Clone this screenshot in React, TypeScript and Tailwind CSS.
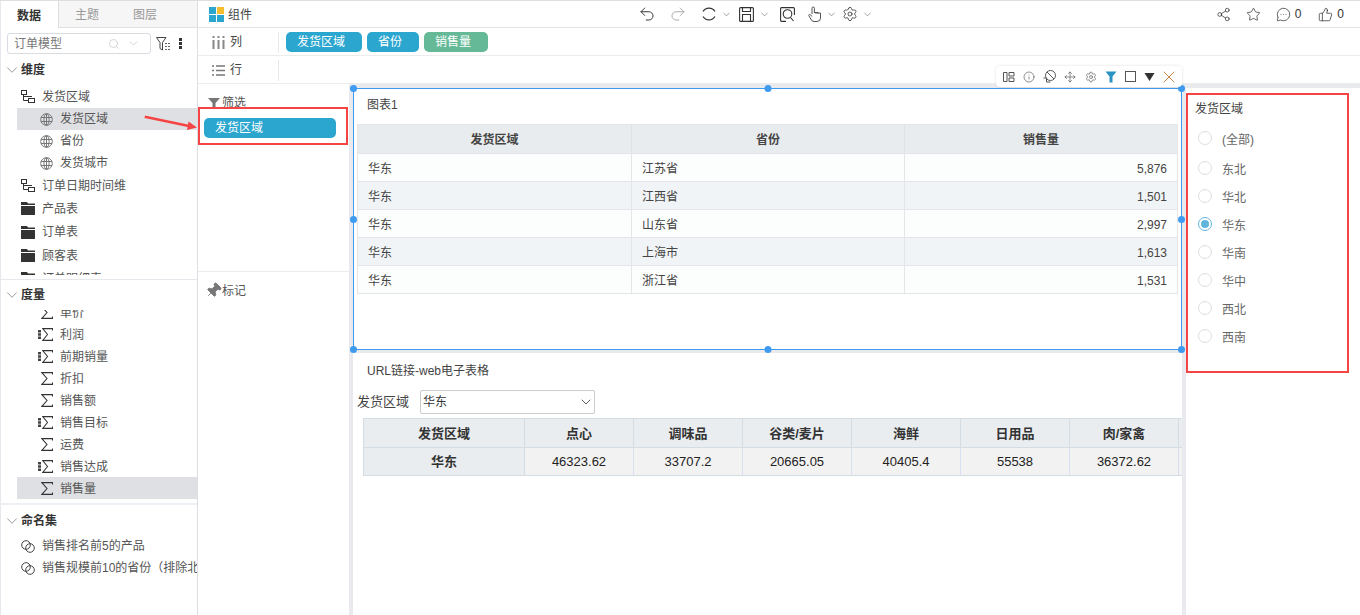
import { ChevronDown, Search, Undo2, Redo2, Settings, Share2, Star, MessageCircleMore, ThumbsUp, Info, Move, X, Pin } from "lucide-react";

const font = "font-['Liberation_Sans','Noto_Sans_CJK_SC',sans-serif]";

function Hier() {
  return (
    <svg width="14" height="14" viewBox="0 0 14 14" fill="none" stroke="#333" strokeWidth="1" className="shrink-0">
      <rect x="0.5" y="0.5" width="5" height="4" />
      <rect x="7.5" y="8.5" width="6" height="4" />
      <path d="M2.5 4.5V10.5H7.5M2.5 6.5H11" />
    </svg>
  );
}

function Globe() {
  return (
    <svg width="13" height="13" viewBox="0 0 13 13" fill="none" stroke="#777" strokeWidth="1" className="shrink-0">
      <circle cx="6.5" cy="6.5" r="5.8" />
      <ellipse cx="6.5" cy="6.5" rx="2.6" ry="5.8" />
      <path d="M1 4.5H12M1 8.5H12M6.5 1V12" />
    </svg>
  );
}

function Folder() {
  return (
    <svg width="14" height="13" viewBox="0 0 14 13" fill="#333" className="shrink-0">
      <path d="M0 0H6L7 1.5H14V3H0ZM0 4H14V13H0Z" />
    </svg>
  );
}

function Sigma({ w = 12 }: { w?: number }) {
  return (
    <svg width={w} height="13" viewBox="0 0 12 13" preserveAspectRatio="none" fill="none" stroke="#333" strokeWidth="1.1" className="shrink-0">
      <path d="M11.5 2.5V0.6H0.8L6 6.5L0.8 12.4H11.5V10.5" />
    </svg>
  );
}

function Rings() {
  return (
    <svg width="14" height="13" viewBox="0 0 14 13" fill="none" stroke="#444" strokeWidth="1" className="shrink-0">
      <circle cx="5" cy="5" r="4.3" />
      <circle cx="9" cy="8" r="4.3" />
    </svg>
  );
}

function BarSigma() {
  return (
    <span className="flex items-center gap-[1px]">
      <svg width="3" height="9" viewBox="0 0 3 9" fill="#444" className="shrink-0">
        <path d="M0 0H3V2.5H0ZM0 3.2H3V5.7H0ZM0 6.5H3V9H0Z" />
      </svg>
      <Sigma w={11} />
    </span>
  );
}

function TreeRow({ icon, label, sel, low, indent = 36 }: { icon: React.ReactNode; label: string; sel?: boolean; low?: boolean; indent?: number }) {
  return (
    <div className={`flex h-[22px] items-center ml-[17px] whitespace-nowrap overflow-hidden ${sel ? "bg-[#dfe0e3]" : ""}`}>
      <div className="flex shrink-0 justify-end" style={{ width: indent }}>{icon}</div>
      <span className={`ml-[7px] text-[12px] text-[#555] ${low ? "pt-[2px]" : ""}`}>{label}</span>
    </div>
  );
}

function TopRow({ icon, label, tall }: { icon: React.ReactNode; label: string; tall?: boolean }) {
  return (
    <div className={`flex items-center pl-[21px] whitespace-nowrap overflow-hidden ${tall ? "h-[24px]" : "h-[23px]"}`}>
      <div className="flex w-[14px] shrink-0 justify-center">{icon}</div>
      <span className="ml-[7px] text-[12px] text-[#555]">{label}</span>
    </div>
  );
}

function SectionHead({ label }: { label: string }) {
  return (
    <div className="flex h-[22px] items-center pl-[3px]">
      <ChevronDown size={18} strokeWidth={1} className="text-[#777]" />
      <span className="text-[12px] font-bold text-[#333]">{label}</span>
    </div>
  );
}

function Sidebar() {
  return (
    <div className="flex h-full w-[198px] shrink-0 flex-col border-r border-[#dcdee3] shadow-[inset_1px_0_0_#e6e8ee]">
      <div className="flex h-[27px] shrink-0 text-[12px]">
        <div className="flex w-[59px] items-center justify-center border-r border-[#ddd] pt-[2px] font-bold text-[#333]">数据</div>
        <div className="flex flex-1 items-center border-b border-[#e2e2e2] bg-[#f6f6f6] pt-[2px] text-[#999]">
          <span className="ml-[16px]">主题</span>
          <span className="ml-[34px]">图层</span>
        </div>
      </div>
      <div className="flex h-[31px] shrink-0 items-center pl-[7px]">
        <div className="flex h-[21px] w-[144px] items-center rounded-[3px] border border-[#d9dbe0] pl-[6px] pr-[10px] text-[12px] text-[#777]">
          <span className="flex-1 pt-[1px]">订单模型</span>
          <Search size={12} strokeWidth={1.2} className="text-[#bbb]" />
          <ChevronDown size={13} strokeWidth={1.2} className="ml-[7px] text-[#bbb]" />
        </div>
        <svg width="16" height="14" viewBox="0 0 16 14" fill="none" stroke="#444" className="ml-[5px]">
          <path d="M0.5 0.5H10L6.5 5.5V13L4 11.5V5.5Z" />
          <path d="M9 6.5H15M9 9.5H15M9 12.5H15" stroke="#666" strokeDasharray="2 1" />
        </svg>
        <div className="ml-[7px] flex flex-col gap-[1px]">
          <div className="h-[3px] w-[3px] bg-[#333]" />
          <div className="h-[3px] w-[3px] bg-[#333]" />
          <div className="h-[3px] w-[3px] bg-[#333]" />
        </div>
      </div>

      <div className="h-[221px] shrink-0 border-b border-[#e6e8ee]">
        <div className="h-[216px] overflow-hidden">
          <SectionHead label="维度" />
          <div className="h-[4px]" />
          <TopRow icon={<Hier />} label="发货区域" />
          <TreeRow icon={<Globe />} label="发货区域" sel />
          <TreeRow icon={<Globe />} label="省份" />
          <TreeRow icon={<Globe />} label="发货城市" />
          <TopRow icon={<Hier />} label="订单日期时间维" />
          <TopRow icon={<Folder />} label="产品表" />
          <TopRow icon={<Folder />} label="订单表" tall />
          <TopRow icon={<Folder />} label="顾客表" />
          <TopRow icon={<Folder />} label="订单明细表" />
        </div>
      </div>

      <div className="h-[225px] shrink-0 overflow-hidden border-b-2 border-[#edeff5]">
        <div className="pt-[4px]">
          <SectionHead label="度量" />
        </div>
        <div className="mt-[4px] h-[189px] overflow-hidden">
          <div className="-mt-[9px]">
            <TreeRow icon={<Sigma />} label="单价" low />
            <TreeRow icon={<BarSigma />} label="利润" low />
            <TreeRow icon={<BarSigma />} label="前期销量" low />
            <TreeRow icon={<Sigma />} label="折扣" low />
            <TreeRow icon={<Sigma />} label="销售额" low />
            <TreeRow icon={<BarSigma />} label="销售目标" low />
            <TreeRow icon={<Sigma />} label="运费" low />
            <TreeRow icon={<BarSigma />} label="销售达成" low />
            <TreeRow icon={<Sigma />} label="销售量" sel low />
          </div>
        </div>
      </div>

      <div className="flex-1 overflow-hidden pt-[5px]">
        <SectionHead label="命名集" />
        <div className="h-[3px]" />
        <TreeRow icon={<Rings />} label="销售排名前5的产品" indent={18} />
        <TreeRow icon={<Rings />} label="销售规模前10的省份（排除北京）" indent={18} />
      </div>
    </div>
  );
}

function Caret({ className = "ml-[5px]" }: { className?: string }) {
  return <ChevronDown size={11} strokeWidth={1.3} className={`${className} text-[#666]`} />;
}

function Toolbar() {
  return (
    <div className="flex h-[27px] shrink-0 items-center border-b border-[#e4e4e4] text-[#333]">
      <div className="flex w-[440px] items-center pl-[11px]">
        <div className="grid h-[15px] w-[15px] grid-cols-2 gap-[1px]">
          <div className="bg-[#2ba6cf]" />
          <div className="bg-[#f5bd2f]" />
          <div className="bg-[#2ba6cf]" />
          <div className="bg-[#2ba6cf]" />
        </div>
        <span className="ml-[4px] pt-[1px] text-[12px] text-[#444]">组件</span>
      </div>
      <div className="flex items-center">
        <Undo2 size={18} strokeWidth={1.3} />
        <Redo2 size={18} strokeWidth={1.3} className="ml-[13px] text-[#aaa]" />
        <svg width="16" height="16" viewBox="0 0 16 16" fill="none" stroke="#333" strokeWidth="1.2" className="ml-[14px]">
          <path d="M2 5.5A7 7 0 0 1 14 5.5M14 10.5A7 7 0 0 1 2 10.5" />
        </svg>
        <Caret className="ml-[4px]" />
        <svg width="15" height="15" viewBox="0 0 15 15" fill="none" stroke="#333" strokeWidth="1.1" className="ml-[7px]">
          <rect x="0.6" y="0.6" width="13.8" height="13.8" rx="1" />
          <path d="M3.5 0.6V4.5H11.5V0.6M3.5 14.4V7.5H11.5V14.4" />
        </svg>
        <Caret />
        <svg width="15" height="15" viewBox="0 0 15 15" fill="none" stroke="#333" strokeWidth="1.1" className="ml-[10px]">
          <path d="M6 14.4H1.5A1 1 0 0 1 0.6 13.4V1.6A1 1 0 0 1 1.5 0.6H13.4A1 1 0 0 1 14.4 1.6V8" />
          <circle cx="7.5" cy="7" r="4.3" />
          <path d="M10.5 10.5L13.5 14" />
        </svg>
        <svg width="14" height="16" viewBox="0 0 14 16" fill="none" stroke="#555" strokeWidth="1" className="ml-[13px]">
          <path d="M4 8V2.2A1.2 1.2 0 0 1 6.4 2.2V7M6.4 6.5H8V8M8 6.5H10V8M10 7H12.5V12A3.5 3.5 0 0 1 9 15.5H6A3.5 3.5 0 0 1 2.8 13L0.8 9.5C0.4 8.5 2 7.8 2.8 9L4 10.5" />
        </svg>
        <Caret className="ml-[4px]" />
        <Settings size={16} strokeWidth={1.2} className="ml-[5px]" />
        <Caret className="ml-[4px]" />
      </div>
      <div className="ml-auto flex items-center pr-[16px] text-[12px]">
        <Share2 size={15} strokeWidth={1.2} />
        <Star size={15} strokeWidth={1.2} className="ml-[15px]" />
        <MessageCircleMore size={15} strokeWidth={1.2} className="ml-[15px]" />
        <span className="ml-[4px]">0</span>
        <ThumbsUp size={15} strokeWidth={1.2} className="ml-[17px]" />
        <span className="ml-[4px]">0</span>
      </div>
    </div>
  );
}

function Pill({ label, color = "bg-[#2ba6cf]", w }: { label: string; color?: string; w: string }) {
  return (
    <div className={`flex h-[20px] items-center rounded-[5px] pl-[11px] text-[12px] text-white ${color} ${w}`}>{label}</div>
  );
}

function ShelfRow({ icon, label, children }: { icon: React.ReactNode; label: string; children?: React.ReactNode }) {
  return (
    <div className="flex h-[28px] shrink-0 items-center border-b border-[#ececec] pt-[1px]">
      <div className="flex h-[21px] w-[81px] items-center border-r border-[#e8e8e8] pl-[14px] text-[12px] text-[#444]">
        <span className="flex w-[13px] justify-center">{icon}</span>
        <span className="ml-[5px]">{label}</span>
      </div>
      <div className="ml-[7px] flex gap-[5px]">{children}</div>
    </div>
  );
}

function ChartCard() {
  const rows = [
    ["江苏省", "5,876"],
    ["江西省", "1,501"],
    ["山东省", "2,997"],
    ["上海市", "1,613"],
    ["浙江省", "1,531"],
  ];
  return (
    <div className="relative h-[262px] shrink-0 border border-[#3f9bf0] bg-white pl-[3px] pr-[3px]">
      <div className="flex h-[35px] items-center pb-[3px] pl-[10px] text-[12px] text-[#444]">图表1</div>
      <div className="border border-[#e3e5e8] text-[12px] text-[#444]">
        <div className="grid h-[28px] grid-cols-[274px_273px_1fr] items-stretch bg-[#e9ecef] font-bold">
          <div className="flex items-center justify-center border-r border-[#dfe2e6] pt-[1px]">发货区域</div>
          <div className="flex items-center justify-center border-r border-[#dfe2e6] pt-[1px]">省份</div>
          <div className="flex items-center justify-center pt-[1px]">销售量</div>
        </div>
        {rows.map((r, i) => (
          <div key={r[0]} className={`grid h-[28px] grid-cols-[274px_273px_1fr] border-t border-[#e3e5e8] ${i % 2 ? "bg-[#f1f4f6]" : "bg-[#fcfdfd]"}`}>
            <div className="flex items-center border-r border-[#e3e5e8] pl-[10px] pt-[3px]">华东</div>
            <div className="flex items-center border-r border-[#e3e5e8] pl-[10px] pt-[3px]">{r[0]}</div>
            <div className="flex items-center justify-end pr-[10px] pt-[3px]">{r[1]}</div>
          </div>
        ))}
      </div>
      <div className="absolute -left-[4px] -top-[4px] h-[7px] w-[7px] rounded-full bg-[#3f9bf0]" />
      <div className="absolute left-1/2 -top-[4px] h-[7px] w-[7px] -translate-x-1/2 rounded-full bg-[#3f9bf0]" />
      <div className="absolute -right-[4px] -top-[4px] h-[7px] w-[7px] rounded-full bg-[#3f9bf0]" />
      <div className="absolute -left-[4px] top-[127px] h-[7px] w-[7px] rounded-full bg-[#3f9bf0]" />
      <div className="absolute -right-[4px] top-[127px] h-[7px] w-[7px] rounded-full bg-[#3f9bf0]" />
      <div className="absolute -left-[4px] -bottom-[4px] h-[7px] w-[7px] rounded-full bg-[#3f9bf0]" />
      <div className="absolute left-1/2 -bottom-[4px] h-[7px] w-[7px] -translate-x-1/2 rounded-full bg-[#3f9bf0]" />
      <div className="absolute -right-[4px] -bottom-[4px] h-[7px] w-[7px] rounded-full bg-[#3f9bf0]" />
      <div className="absolute -right-[1px] -top-[23px] flex h-[21px] w-[186px] items-center justify-between rounded-[4px] bg-white px-[7px] text-[#555] shadow-[0_0_3px_rgba(0,0,0,0.12)]">
        <svg width="12" height="12" viewBox="0 0 12 12" fill="none" stroke="#555">
          <path d="M0.5 1.5H4V10.5H0.5ZM6 1.5H11V5H6ZM6 7H11V10.5H6Z" />
        </svg>
        <Info size={12} strokeWidth={1.3} />
        <svg width="13" height="13" viewBox="0 0 13 13" fill="none" stroke="#555">
          <circle cx="7.5" cy="5.5" r="5" />
          <path d="M4 2L11 9M0.5 8H3.5V12H7.5" />
        </svg>
        <Move size={12} strokeWidth={1.3} />
        <Settings size={12} strokeWidth={1.3} />
        <svg width="12" height="12" viewBox="0 0 12 12" fill="#2a93c2">
          <path d="M0.5 0.5H11.5L7.5 5.5V11.5H4.5V5.5Z" />
        </svg>
        <svg width="11" height="11" viewBox="0 0 11 11" fill="none" stroke="#555">
          <rect x="0.5" y="0.5" width="10" height="10" />
        </svg>
        <svg width="11" height="8" viewBox="0 0 11 8" fill="#333">
          <path d="M0.5 0H10.5L5.5 8Z" />
        </svg>
        <X size={20} strokeWidth={1.2} className="-mx-[4px] text-[#c9894d]" />
      </div>
    </div>
  );
}

function SheetCard() {
  const cols: [string, string][] = [
    ["点心", "46323.62"],
    ["调味品", "33707.2"],
    ["谷类/麦片", "20665.05"],
    ["海鲜", "40405.4"],
    ["日用品", "55538"],
    ["肉/家禽", "36372.62"],
  ];
  return (
    <div className="min-h-0 flex-1 overflow-hidden bg-white text-[12px]">
      <div className="flex h-[37px] items-center pl-[14px] pb-[1px] text-[#444]">URL链接-web电子表格</div>
      <div className="flex h-[24px] items-center pl-[4px]">
        <span className="text-[13px] text-[#444]">发货区域</span>
        <div className="ml-[11px] flex h-[24px] w-[175px] items-center justify-between rounded-[2px] border border-[#ccc] pl-[2px] text-[#333]">
          华东
          <ChevronDown size={16} strokeWidth={1.2} />
        </div>
      </div>
      <div className="ml-[10px] mt-[4px] flex h-[58px] w-[830px] border-b border-l border-t border-[#d5dde4] text-[13px]">
        <div className="w-[161px] shrink-0 border-r border-[#d5dde4] bg-[#e9edf0] font-bold text-[#333]">
          <div className="flex h-[29px] items-center justify-center border-b border-[#d5dde4] pt-[2px]">发货区域</div>
          <div className="flex h-[27px] items-center justify-center">华东</div>
        </div>
        {cols.map((c) => (
          <div key={c[0]} className="w-[109px] shrink-0">
            <div className="flex h-[29px] items-center justify-center border-b border-r border-[#d5dde4] bg-[#e9edf0] pt-[2px] font-bold text-[#333]">{c[0]}</div>
            <div className="flex h-[27px] items-center justify-center border-r border-[#d6e0f0] bg-[#f2f2f2] text-[#222]">{c[1]}</div>
          </div>
        ))}
        <div className="flex-1">
          <div className="h-[29px] border-b border-[#d5dde4] bg-[#e9edf0]" />
          <div className="h-[27px] bg-[#f2f2f2]" />
        </div>
      </div>
    </div>
  );
}

function RadioPanel() {
  const opts = ["东北", "华北", "华东", "华南", "华中", "西北", "西南"];
  return (
    <div className="w-[174px] shrink-0 self-stretch bg-white pl-[10px] text-[12px]">
      <div className="-ml-[1px] flex h-[38px] items-center pt-[4px] text-[#444]">发货区域</div>
      <div className="flex h-[28px] items-center text-[#666]">
        <span className="mb-[4px] ml-[2px] h-[14px] w-[14px] rounded-full border border-[#dcdee3]" />
        <span className="ml-[10px]">(全部)</span>
      </div>
      <div className="mt-[2px]">
        {opts.map((o) => (
          <div key={o} className="flex h-[28px] items-center text-[#666]">
            {o === "华东" ? (
              <span className="mb-[4px] ml-[2px] flex h-[14px] w-[14px] items-center justify-center rounded-full border border-[#5fb6dc]">
                <span className="h-[8px] w-[8px] rounded-full bg-[#5fb6dc]" />
              </span>
            ) : (
              <span className="mb-[4px] ml-[2px] h-[14px] w-[14px] rounded-full border border-[#dcdee3]" />
            )}
            <span className="ml-[10px]">{o}</span>
          </div>
        ))}
      </div>
    </div>
  );
}

export default function App() {
  return (
    <div className={`relative flex h-[615px] w-[1360px] flex-col overflow-hidden border-t border-[#dedede] bg-white ${font}`}>
      <div className="flex min-h-0 flex-1">
        <Sidebar />
        <div className="flex min-w-0 flex-1 flex-col">
          <Toolbar />
          <ShelfRow
            icon={
              <svg width="13" height="13" viewBox="0 0 13 13" fill="#888">
                <path d="M0.5 0H2.5V2H0.5ZM0.5 4H2.5V13H0.5ZM5.5 0H7.5V2H5.5ZM5.5 4H7.5V13H5.5ZM10.5 0H12.5V2H10.5ZM10.5 4H12.5V13H10.5Z" />
              </svg>
            }
            label="列"
          >
            <Pill label="发货区域" w="w-[76px]" />
            <Pill label="省份" w="w-[52px]" />
            <Pill label="销售量" color="bg-[#65b997]" w="w-[64px]" />
          </ShelfRow>
          <ShelfRow
            icon={
              <svg width="13" height="11" viewBox="0 0 13 11" fill="none" stroke="#777" strokeWidth="1.4">
                <path d="M0 1H2M4 1H13M0 5.5H2M4 5.5H13M0 10H2M4 10H13" />
              </svg>
            }
            label="行"
          />
          <div className="flex min-h-0 flex-1">
            <div className="flex w-[151px] shrink-0 flex-col bg-white text-[12px] text-[#555]">
              <div className="h-[187px] px-[6px] pt-[11px]">
                <div className="flex h-[16px] items-center gap-[2px] pl-[4px]">
                  <svg width="12" height="11" viewBox="0 0 12 11" fill="#777">
                    <path d="M0 0H12L7.5 5V11H4.5V5Z" />
                  </svg>
                  <span>筛选</span>
                </div>
                <div className="mt-[7px] flex h-[20px] w-[132px] items-center rounded-[5px] bg-[#2ba6cf] pl-[11px] text-white">发货区域</div>
              </div>
              <div className="flex h-[38px] items-center border-t border-[#ececec] pl-[7px]">
                <Pin size={17} strokeWidth={1.2} fill="#777" className="rotate-45 text-[#777]" />
                <span>标记</span>
              </div>
            </div>
            <div className="flex min-w-0 flex-1 bg-[#e8eaed] pl-[4px] pt-[4px]">
              <div className="flex w-[829px] shrink-0 flex-col gap-[3px]">
                <ChartCard />
                <SheetCard />
              </div>
              <div className="w-[4px] shrink-0" />
              <div className="flex flex-1 bg-white">
                <RadioPanel />
              </div>
            </div>
          </div>
        </div>
      </div>

      {/* annotations over the screenshot */}
      <div className="absolute left-[198px] top-[106px] h-[38px] w-[150px] border-2 border-[#f44444]" />
      <div className="absolute left-[1186px] top-[92px] h-[280px] w-[163px] border-2 border-[#f44444]" />
      <svg className="absolute left-[144px] top-[112px]" width="56" height="20" viewBox="0 0 56 20" fill="#f44444">
        <path d="M1 2.5L44 11.5L44.5 8.5L53 14.5L43 17L43.5 14L0.5 5Z" />
      </svg>
    </div>
  );
}
